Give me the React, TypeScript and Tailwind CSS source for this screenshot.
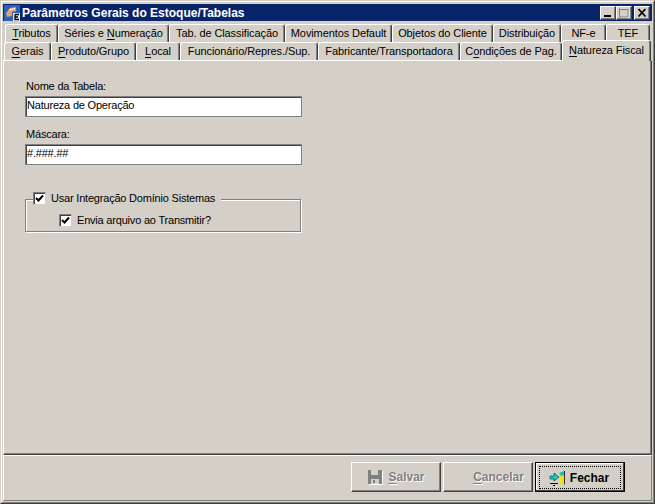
const rowOne = [
  { label: "Tributos", mark: "T", w: "w-[53px]" },
  { label: "Séries e Numeração", mark: "N", w: "w-[111px]" },
  { label: "Tab. de Classificação", mark: "", w: "w-[116px]" },
  { label: "Movimentos Default", mark: "", w: "w-[107px]" },
  { label: "Objetos do Cliente", mark: "", w: "w-[101px]" },
  { label: "Distribuição", mark: "", w: "w-[68px]" },
  { label: "NF-e", mark: "", w: "w-[45px]" },
  { label: "TEF", mark: "", w: "w-[44px]" },
];

const rowTwo = [
  { label: "Gerais", mark: "G", w: "w-[47px]" },
  { label: "Produto/Grupo", mark: "P", w: "w-[85px]" },
  { label: "Local", mark: "L", w: "w-[44px]" },
  { label: "Funcionário/Repres./Sup.", mark: "", w: "w-[138px]" },
  { label: "Fabricante/Transportadora", mark: "", w: "w-[142px]" },
  { label: "Condições de Pag.", mark: "o", w: "w-[102px]" },
];

function Marked({ label, mark }: { label: string; mark: string }) {
  if (!mark) return <>{label}</>;
  const i = label.indexOf(mark);
  return (
    <>
      {label.slice(0, i)}
      <span className="underline underline-offset-2">{mark}</span>
      {label.slice(i + 1)}
    </>
  );
}

function Tab({ label, mark, w }: { label: string; mark: string; w: string }) {
  return (
    <div
      className={`${w} h-[18px] shrink-0 flex items-center justify-center bg-[#d4d0c8] border-l border-t border-r border-white border-r-[#404040] rounded-t-[3px] shadow-[inset_-1px_0_0_#808080] text-black whitespace-nowrap`}
    >
      <span>
        <Marked label={label} mark={mark} />
      </span>
    </div>
  );
}

function Check() {
  return (
    <span className="w-[13px] h-[13px] shrink-0 bg-white border border-t-[#808080] border-l-[#808080] border-r-[#d4d0c8] border-b-[#d4d0c8] shadow-[inset_1px_1px_0_#404040] flex items-center justify-center">
      <svg width="9" height="9" viewBox="0 0 9 9">
        <path d="M1 4 L3.5 6.5 L8 1.5" fill="none" stroke="#000" strokeWidth="2" />
      </svg>
    </span>
  );
}

function Field({ value }: { value: string }) {
  return (
    <div className="w-[277px] h-[21px] bg-white border border-[#808080] shadow-[inset_1px_1px_0_#404040] flex items-center pl-[1px] pb-[2px] text-black tracking-[-0.2px]">
      {value}
    </div>
  );
}

function AppIcon() {
  return (
    <svg width="16" height="16" viewBox="0 0 16 16" className="shrink-0">
      <rect x="0" y="0" width="16" height="16" fill="#2b63b8" />
      <path d="M2 8 L6 3 L12 2 L12 6 L8 7 L8 11 L3 12 Z" fill="#e8a070" />
      <path d="M5 5 L11 3.5" stroke="#fff" strokeWidth="1.2" />
      <rect x="9" y="8" width="7" height="8" fill="#e8e8e8" />
      <path d="M11 9.5 H15 M11 9.5 V14.5 H15 M11 12 H14" stroke="#000" strokeWidth="1.3" fill="none" />
    </svg>
  );
}

function WinButton({ kind }: { kind: "min" | "max" | "close" }) {
  return (
    <div className="w-[16px] h-[14px] bg-[#d4d0c8] border border-t-white border-l-white border-r-[#404040] border-b-[#404040] shadow-[inset_-1px_-1px_0_#808080] flex items-center justify-center">
      <svg width="12" height="10" viewBox="0 0 12 10">
        {kind === "min" && <rect x="2" y="7" width="7" height="2" fill="#000" />}
        {kind === "max" && (
          <>
            <path d="M3 9.5 H11 V2" fill="none" stroke="#fff" strokeWidth="1" />
            <path d="M2 1.5 H10 M1.5 0.5 V9 H10 V1" fill="none" stroke="#808080" strokeWidth="1" />
          </>
        )}
        {kind === "close" && (
          <path d="M2.5 1 L9.5 8.5 M9.5 1 L2.5 8.5" stroke="#000" strokeWidth="1.8" fill="none" />
        )}
      </svg>
    </div>
  );
}

function Floppy() {
  return (
    <svg width="16" height="16" viewBox="0 0 16 16" className="shrink-0">
      <path d="M1 1 H4 V6 H11 V1 H15 V15 H1 Z" fill="#808080" />
      <rect x="4" y="10" width="8" height="5" fill="#d4d0c8" />
      <rect x="6" y="11" width="2" height="3" fill="#808080" />
      <path d="M2 15.5 H15.5 V2" stroke="#fff" strokeWidth="1" fill="none" />
    </svg>
  );
}

function Door() {
  return (
    <svg width="18" height="16" viewBox="0 0 18 16" className="shrink-0">
      <path d="M10 3 L15 1 V14 L10 15 Z" fill="#f4e020" />
      <path d="M10 3 L15 1 V5 L12 6 Z" fill="#10c0d0" />
      <path d="M15.5 1 V14.5" stroke="#303030" strokeWidth="1" />
      <path d="M1 6 H5 V3 L10 7 L5 11 V9 H1 Z" fill="#20c8c0" stroke="#005050" strokeWidth="0.7" />
      <path d="M1 13.5 H9 M4 15.5 H6" stroke="#000" strokeWidth="1" />
    </svg>
  );
}

function DisabledButton({ children, shift }: { children: React.ReactNode; shift?: boolean }) {
  return (
    <div
      className={`w-[90px] h-[30px] bg-[#d4d0c8] border border-t-white border-l-white border-r-[#404040] border-b-[#404040] shadow-[inset_-1px_-1px_0_#808080] flex items-center justify-center gap-[5px] font-bold text-[12px] text-[#808080] [text-shadow:1px_1px_0_#fff] ${shift ? "pl-[21px]" : ""}`}
    >
      {children}
    </div>
  );
}

export default function App() {
  return (
    <div className="w-[655px] h-[504px] bg-[#d4d0c8] border border-t-[#d4d0c8] border-l-[#d4d0c8] border-r-[#404040] border-b-[#404040] overflow-hidden font-['Liberation_Sans',sans-serif] text-[11px] leading-none">
      <div className="h-full border border-t-white border-l-white border-r-[#808080] border-b-[#808080] pt-[2px] pl-[1px] pr-[1px] pb-[1px] flex flex-col">
        <div className="h-[17px] shrink-0 bg-[#0a246a] flex items-center pl-[1px] pr-[2px] text-white font-bold text-[12px]">
          <AppIcon />
          <span className="ml-[2px] flex-1">Parâmetros Gerais do Estoque/Tabelas</span>
          <WinButton kind="min" />
          <WinButton kind="max" />
          <div className="w-[2px]" />
          <WinButton kind="close" />
        </div>

        <div className="pt-[3px] flex-1 flex flex-col tracking-[-0.1px]">
          <div className="flex pl-[2px]">
            {rowOne.map((t) => (
              <Tab key={t.label} {...t} />
            ))}
          </div>
          <div className="flex pl-[1px]">
            {rowTwo.map((t) => (
              <Tab key={t.label} {...t} />
            ))}
            <div className="relative z-10 w-[89px] h-[21px] -mt-[2px] -mb-[1px] pb-[2px] flex items-center justify-center bg-[#d4d0c8] border-l border-t border-r border-white border-r-[#404040] rounded-t-[3px] shadow-[inset_-1px_0_0_#808080] shrink-0">
              <span>
                <Marked label="Natureza Fiscal" mark="N" />
              </span>
            </div>
          </div>

          <div className="flex-1 border border-t-white border-l-white border-r-[#404040] border-b-[#404040] shadow-[inset_-1px_-1px_0_#808080] pl-[21px] pt-[17px] text-black tracking-[-0.2px]">
            <div className="h-[18px] pl-[1px] pb-[2px] flex items-center">Nome da Tabela:</div>
            <Field value="Natureza de Operação" />
            <div className="h-[17px] pl-[1px] pb-[2px] mt-[10px] flex items-center">Máscara:</div>
            <Field value="#.###.##" />

            <div className="relative mt-[34px] w-[276px] h-[33px] border border-[#808080] shadow-[inset_1px_1px_0_#fff,1px_1px_0_#fff]">
              <div className="absolute left-[7px] -top-[8px] h-[13px] bg-[#d4d0c8] flex items-center gap-[5px] pr-[6px]">
                <Check />
                <span>Usar Integração Domínio Sistemas</span>
              </div>
              <div className="absolute left-[33px] top-[14px] flex items-center gap-[5px]">
                <Check />
                <span>Envia arquivo ao Transmitir?</span>
              </div>
            </div>
          </div>
        </div>

        <div className="h-[46px] shrink-0 border border-t-white border-l-white border-r-[#808080] border-b-[#808080] flex items-start justify-end gap-[2px] pt-[6px] pr-[26px]">
          <DisabledButton>
            <Floppy />
            <span>
              <span className="underline underline-offset-2">S</span>alvar
            </span>
          </DisabledButton>
          <DisabledButton shift>
            <span>
              <span className="underline underline-offset-2">C</span>ancelar
            </span>
          </DisabledButton>
          <div className="w-[90px] h-[30px] bg-[#d4d0c8] border border-black shadow-[inset_-1px_-1px_0_#404040,inset_1px_1px_0_#fff] pt-[3px] pl-[3px] pr-[3px] pb-[2px] flex">
            <div className="flex-1 border border-dotted border-black flex items-center justify-center gap-[3px] pr-[2px] font-bold text-black text-[12px]">
              <Door />
              <span>Fechar</span>
            </div>
          </div>
        </div>
      </div>
    </div>
  );
}
